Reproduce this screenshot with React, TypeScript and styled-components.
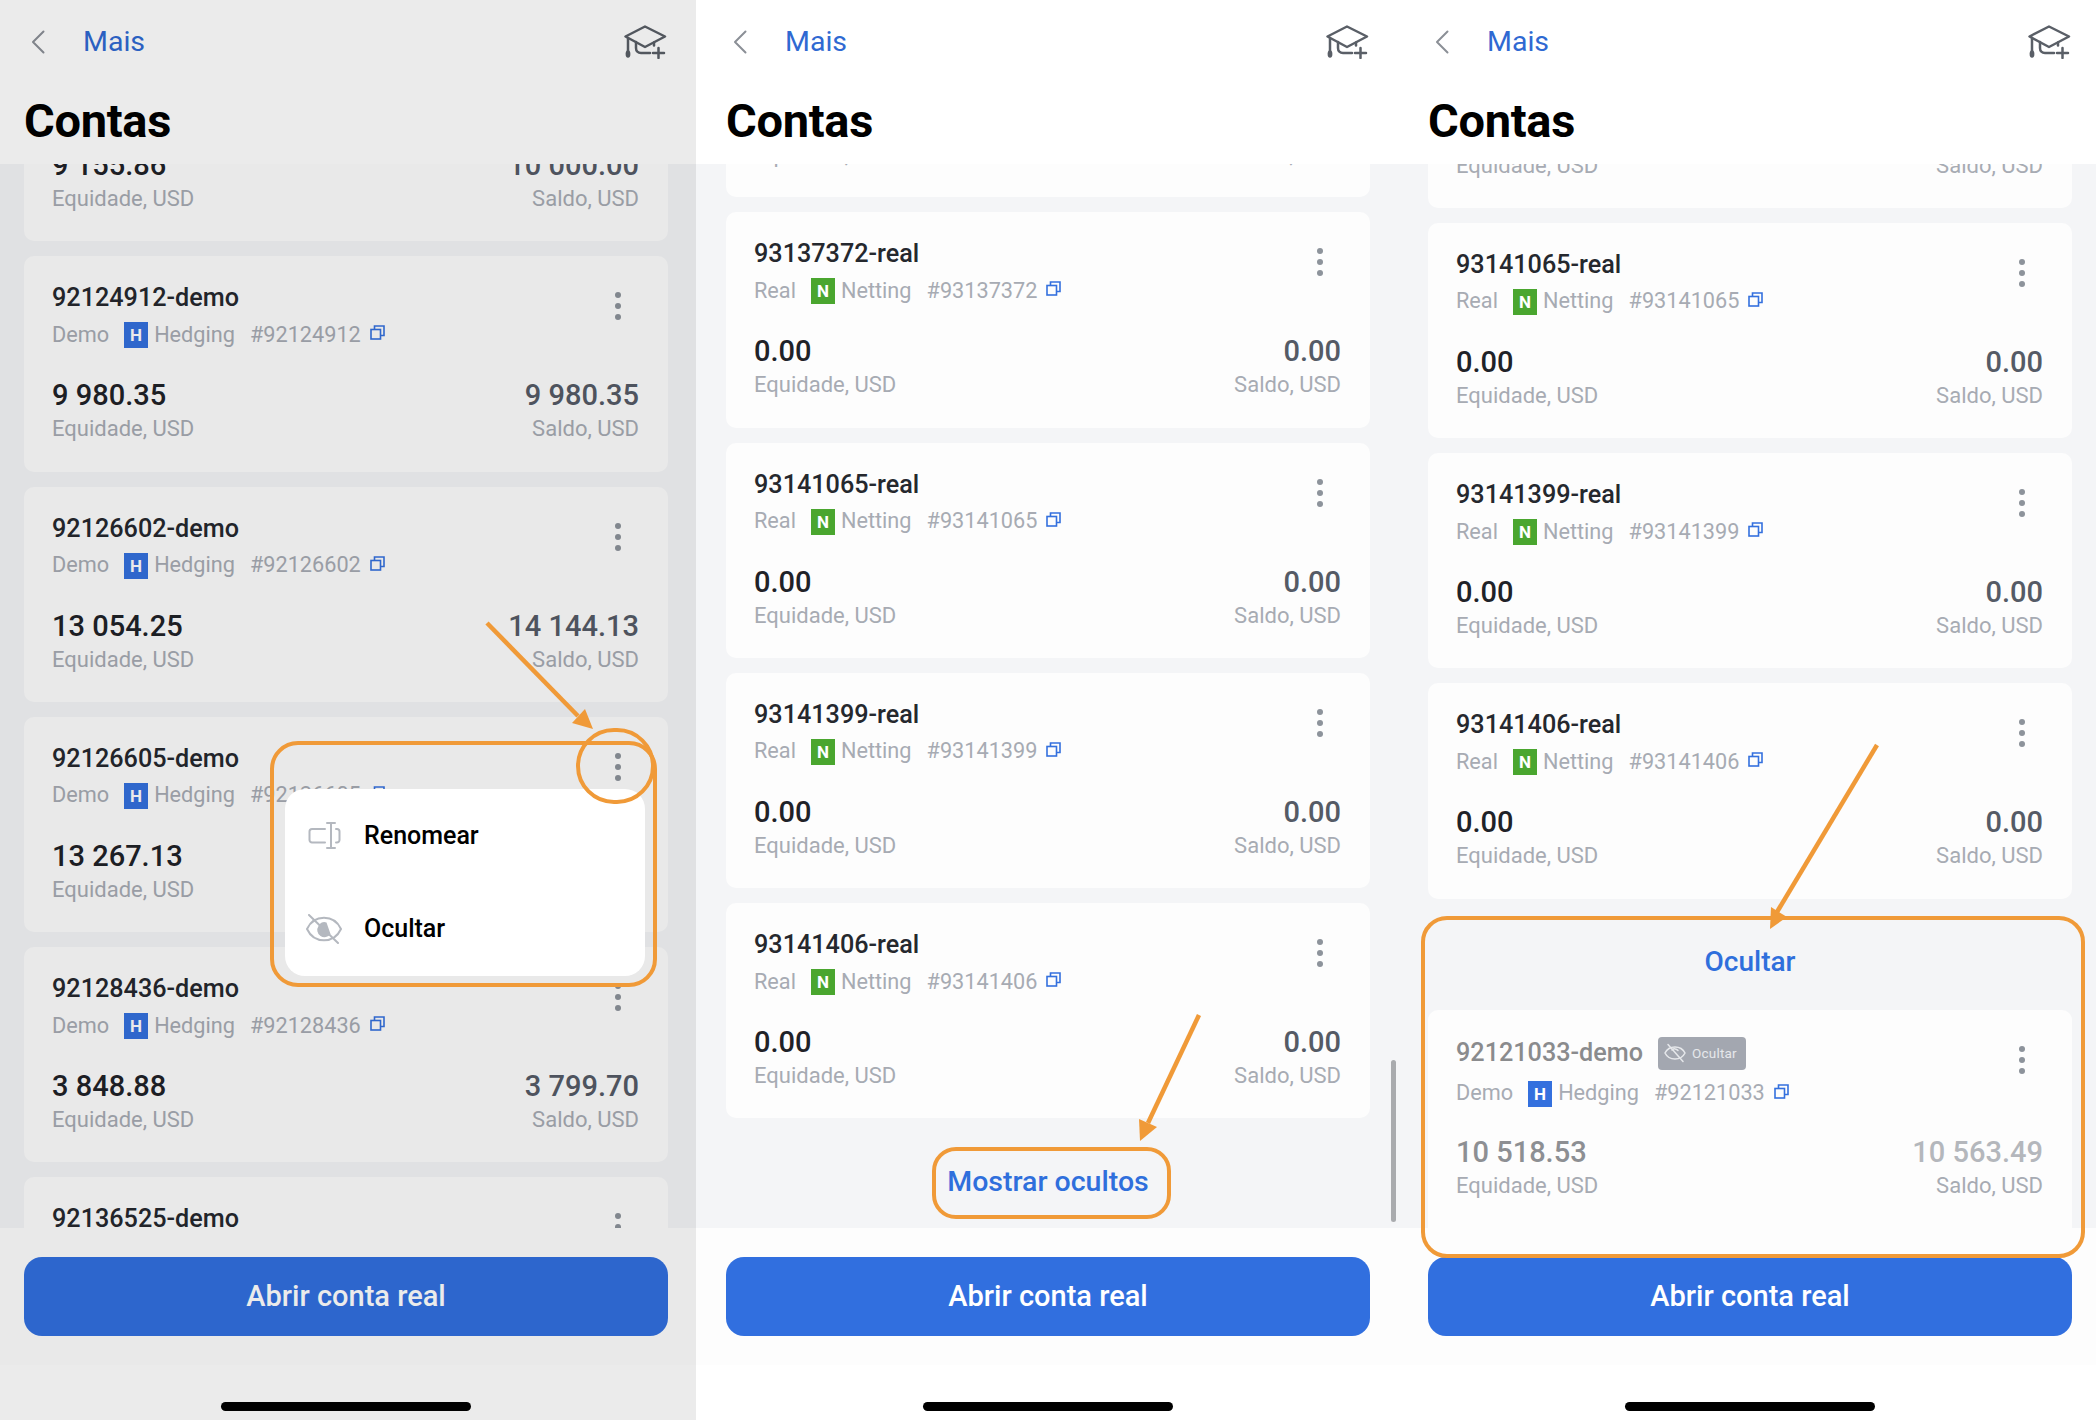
import React from "react";
import styled, { createGlobalStyle } from "styled-components";

const Global = createGlobalStyle`
  html, body { margin: 0; padding: 0; background: #fff; }
  body { font-family: Roboto, "Liberation Sans", sans-serif; }
  * { box-sizing: border-box; }
`;

const Page = styled.div`
  width: 2096px;
  height: 1420px;
  display: grid;
  grid-template-columns: 696px 706px 694px;
  overflow: hidden;
`;

const Panel = styled.section`
  position: relative;
  height: 1420px;
  display: flex;
  flex-direction: column;
  overflow: hidden;
  background: #fff;
`;

const Header = styled.header<{ $inset: number }>`
  height: 164px;
  flex: none;
  padding-left: ${(p) => p.$inset}px;
  background: #fff;
`;

const TopRow = styled.div`
  width: 643px;
  height: 84px;
  padding-left: 7px;
  display: flex;
  align-items: center;
`;

const Back = styled.svg`
  width: 14px;
  height: 24px;
  margin-right: 38px;
  flex: none;
`;

const BackLabel = styled.span`
  font-size: 28.5px;
  line-height: 34px;
  color: #2f69d2;
  flex: 1;
`;

const CapIcon = styled.svg`
  width: 43px;
  height: 34px;
  margin-top: -1px;
  flex: none;
`;

const Title = styled.h1`
  margin: 10px 0 0;
  font-size: 47px;
  line-height: 54px;
  font-weight: 700;
  color: #000;
  letter-spacing: -0.3px;
`;

const ListArea = styled.div<{ $inset: number }>`
  flex: 1;
  min-height: 0;
  overflow: hidden;
  background: #f4f5f7;
  padding-left: ${(p) => p.$inset}px;
`;

const List = styled.div<{ $scroll: number }>`
  width: 644px;
  margin-top: ${(p) => -p.$scroll}px;
  display: flex;
  flex-direction: column;
  gap: 15px;
`;

const Card = styled.article<{ $hidden?: boolean }>`
  height: ${(p) => (p.$hidden ? 240 : 215.3)}px;
  flex: none;
  padding: 24px 29px 0 28px;
  border-radius: 10px;
  background: #fdfdfd;
`;

const Head = styled.div`
  display: flex;
  justify-content: space-between;
  align-items: flex-start;
  padding-right: 18px;
`;

const Info = styled.div`
  min-width: 0;
`;

const NameRow = styled.div<{ $hidden?: boolean }>`
  display: flex;
  align-items: center;
  height: ${(p) => (p.$hidden ? 39 : 34)}px;
  padding-top: ${(p) => (p.$hidden ? 0 : 2)}px;
  gap: 15px;
`;

const Name = styled.div<{ $hidden?: boolean }>`
  font-size: 25.2px;
  line-height: 34px;
  font-weight: 500;
  white-space: nowrap;
  color: ${(p) => (p.$hidden ? "#8a8b8d" : "#25282e")};
`;

const HiddenTag = styled.div`
  width: 88px;
  height: 33px;
  display: flex;
  align-items: center;
  gap: 6px;
  padding-left: 6px;
  border-radius: 4px;
  background: #a3a7b0;
  color: #e6e8eb;
  font-size: 13.5px;
  letter-spacing: 0.2px;
`;

const SubRow = styled.div`
  margin-top: 8px;
  height: 26px;
  padding-bottom: 2px;
  display: flex;
  align-items: center;
  font-size: 21.7px;
  color: #a7abb3;
  white-space: nowrap;
`;

const Badge = styled.span<{ $kind: "H" | "N" }>`
  width: 24px;
  height: 26px;
  margin: 2px 6px 0 15px;
  flex: none;
  display: flex;
  align-items: center;
  justify-content: center;
  background: ${(p) => (p.$kind === "H" ? "#3470de" : "#4aa62f")};
  color: #fff;
  font-size: 17px;
  font-weight: 700;
`;

const AccountNo = styled.span`
  margin-left: 15px;
`;

const CopyIcon = styled.svg`
  width: 15px;
  height: 15px;
  margin: -3px 0 0 9px;
  flex: none;
`;

const Dots = styled.div`
  margin-top: 12px;
  display: flex;
  flex-direction: column;
  gap: 5px;
  flex: none;
`;

const Dot = styled.i`
  width: 6px;
  height: 6px;
  border-radius: 50%;
  background: #8d939b;
`;

const Figures = styled.div<{ $hidden?: boolean }>`
  margin-top: ${(p) => (p.$hidden ? 28 : 30)}px;
  display: flex;
  justify-content: space-between;
`;

const Figure = styled.div<{ $end?: boolean }>`
  text-align: ${(p) => (p.$end ? "right" : "left")};
`;

const Value = styled.div<{ $tone: string }>`
  font-size: 29px;
  line-height: 34px;
  font-weight: 500;
  color: ${(p) => p.$tone};
`;

const Caption = styled.div`
  margin-top: 4px;
  font-size: 22px;
  line-height: 26px;
  color: #a7abb3;
`;

const SectionLink = styled.div<{ $size: number }>`
  height: 111px;
  padding-top: 15px;
  margin: -15px 0;
  flex: none;
  display: flex;
  align-items: center;
  justify-content: center;
  font-size: ${(p) => p.$size}px;
  font-weight: 500;
  color: #2f6fdc;
`;

const Footer = styled.footer<{ $inset: number }>`
  flex: none;
  height: 192px;
  padding: 29px 0 0 ${(p) => p.$inset}px;
  background: linear-gradient(#fdfdfd 137px, #fff 137px);
`;

const OpenButton = styled.button`
  display: block;
  width: 644px;
  height: 79px;
  padding: 0 0 2px;
  border: 0;
  border-radius: 18px;
  background: #316fdf;
  color: #fff;
  font-family: inherit;
  font-size: 29px;
  font-weight: 500;
`;

const HomeBar = styled.div`
  width: 250px;
  height: 9px;
  margin: 66px 0 0 197px;
  border-radius: 5px;
  background: #000;
`;

const Scrim = styled.div`
  position: absolute;
  inset: 0;
  background: rgba(0, 0, 0, 0.08);
`;

const Menu = styled.div`
  position: absolute;
  left: 285px;
  top: 789px;
  width: 360px;
  height: 187px;
  padding-bottom: 1px;
  border-radius: 20px;
  background: #fff;
  display: flex;
  flex-direction: column;
`;

const MenuItem = styled.div`
  flex: 1;
  display: flex;
  align-items: center;
  gap: 22px;
  padding-left: 21px;
  font-size: 25px;
  font-weight: 500;
  color: #000;
`;

const MenuIcon = styled.svg`
  width: 36px;
  height: 30px;
  flex: none;
`;

const TagEye = styled.svg`
  width: 22px;
  height: 20px;
  flex: none;
`;

const Highlight = styled.div<{ $x: number; $y: number; $w: number; $h: number; $r: number }>`
  position: absolute;
  left: ${(p) => p.$x}px;
  top: ${(p) => p.$y}px;
  width: ${(p) => p.$w}px;
  height: ${(p) => p.$h}px;
  border: 4.5px solid #f09a38;
  border-radius: ${(p) => p.$r}px;
  pointer-events: none;
`;

const Arrow = styled.svg`
  position: absolute;
  inset: 0;
  width: 100%;
  height: 100%;
  pointer-events: none;
`;

const ScrollThumb = styled.div`
  position: absolute;
  left: 695px;
  top: 1060px;
  width: 5px;
  height: 162px;
  border-radius: 3px;
  background: #a9abae;
`;

const BackGlyph = () => (
  <Back viewBox="0 0 14 24" fill="none" stroke="#8b8f96" strokeWidth="2" strokeLinecap="round" strokeLinejoin="round">
    <path d="M12.5 1.5 2 12l10.5 10.5" />
  </Back>
);

const CapGlyph = () => (
  <CapIcon viewBox="0 0 43 34" fill="none" stroke="#5a5f67" strokeWidth="2.5" strokeLinecap="round" strokeLinejoin="round">
    <path d="M21 1.500 1.500 11.500 21 22l20-10.500z" />
    <path d="M4 13v13" />
    <ellipse cx="4" cy="29" rx="2.400" ry="3.800" fill="#5a5f67" stroke="none" />
    <path d="M12 17v6c0 3 2 5 5 5h9" />
    <path d="M30 17.500v3" />
    <path d="M34.500 23v10M29 28h11" />
  </CapIcon>
);

const CopyGlyph = () => (
  <CopyIcon viewBox="0 0 15 15" fill="none" stroke="#3470de" strokeWidth="1.6">
    <rect x="1" y="4.500" width="9.500" height="9.500" />
    <path d="M4.500 4.500V1H14v9.500h-3.500" />
  </CopyIcon>
);

const EyeOff = () => (
  <MenuIcon viewBox="0 0 36 30" fill="none" stroke="#b4b8bf" strokeWidth="2">
    <path d="M1 15C8 0 28 0 35 15 28 30 8 30 1 15z" />
    <path d="M12.500 12a6 6 0 0 1 8-3.500l4 11.500a6 6 0 0 1-12-8z" fill="#b4b8bf" stroke="none" />
    <path d="M3 1l29 28" strokeLinecap="round" />
  </MenuIcon>
);

const TagEyeGlyph = () => (
  <TagEye viewBox="0 0 22 20" fill="none" stroke="#e6e8eb" strokeWidth="1.5" strokeLinecap="round">
    <path d="M1 10C5 2 17 2 21 10 17 18 5 18 1 10z" />
    <path d="M8 7a4 4 0 0 1 6 .5" />
    <path d="M4 1.500l15 17" />
  </TagEye>
);

const RenameGlyph = () => (
  <MenuIcon viewBox="0 0 36 30" fill="none" stroke="#b4b8bf" strokeWidth="2" strokeLinecap="round">
    <path d="M19 8H6a2.500 2.500 0 0 0-2.500 2.500v8.500A2.500 2.500 0 0 0 6 21.500h13" />
    <path d="M25 2v25M21 2h8M21 27h8" />
    <path d="M30 8h1a2.500 2.500 0 0 1 2.500 2.500v8.500a2.500 2.500 0 0 1-2.500 2.500h-1" />
  </MenuIcon>
);

type Account = {
  name: string;
  kind: "H" | "N";
  equity: string;
  balance: string;
  hidden?: boolean;
};

const AccountCard = ({ name, kind, equity, balance, hidden }: Account) => {
  const [id, type] = name.split("-");
  return (
    <Card $hidden={hidden}>
      <Head>
        <Info>
          <NameRow $hidden={hidden}>
            <Name $hidden={hidden}>{name}</Name>
            {hidden && (
              <HiddenTag>
                <TagEyeGlyph />
                Ocultar
              </HiddenTag>
            )}
          </NameRow>
          <SubRow>
            {type === "demo" ? "Demo" : "Real"}
            <Badge $kind={kind}>{kind}</Badge>
            {kind === "H" ? "Hedging" : "Netting"}
            <AccountNo>#{id}</AccountNo>
            <CopyGlyph />
          </SubRow>
        </Info>
        <Dots>
          <Dot />
          <Dot />
          <Dot />
        </Dots>
      </Head>
      <Figures $hidden={hidden}>
        <Figure>
          <Value $tone={hidden ? "#8d8f93" : "#1f2228"}>{equity}</Value>
          <Caption>Equidade, USD</Caption>
        </Figure>
        <Figure $end>
          <Value $tone={hidden ? "#b4b7bc" : "#555b66"}>{balance}</Value>
          <Caption>Saldo, USD</Caption>
        </Figure>
      </Figures>
    </Card>
  );
};

const ArrowMark = ({ line, head }: { line: string; head: string }) => (
  <Arrow>
    <path d={line} stroke="#f09a38" strokeWidth="4.5" fill="none" />
    <polygon points={head} fill="#f09a38" />
  </Arrow>
);

const Shell = ({ inset, scroll, accounts, children, overlay }: {
  inset: number;
  scroll: number;
  accounts: Account[];
  children?: React.ReactNode;
  overlay?: React.ReactNode;
}) => (
  <Panel>
    <Header $inset={inset}>
      <TopRow>
        <BackGlyph />
        <BackLabel>Mais</BackLabel>
        <CapGlyph />
      </TopRow>
      <Title>Contas</Title>
    </Header>
    <ListArea $inset={inset}>
      <List $scroll={scroll}>
        {accounts.map((a) => (
          <AccountCard key={a.name} {...a} />
        ))}
        {children}
      </List>
    </ListArea>
    <Footer $inset={inset}>
      <OpenButton>Abrir conta real</OpenButton>
      <HomeBar />
    </Footer>
    {overlay}
  </Panel>
);

const demo: Account[] = [
  { name: "92121033-demo", kind: "H", equity: "9 155.86", balance: "10 000.00" },
  { name: "92124912-demo", kind: "H", equity: "9 980.35", balance: "9 980.35" },
  { name: "92126602-demo", kind: "H", equity: "13 054.25", balance: "14 144.13" },
  { name: "92126605-demo", kind: "H", equity: "13 267.13", balance: "13 267.13" },
  { name: "92128436-demo", kind: "H", equity: "3 848.88", balance: "3 799.70" },
  { name: "92136525-demo", kind: "H", equity: "0.00", balance: "0.00" },
];

const real = (ids: string[]): Account[] =>
  ids.map((id) => ({ name: `${id}-real`, kind: "N", equity: "0.00", balance: "0.00" }));

export default function App() {
  return (
    <>
      <Global />
      <Page>
        <Shell
          inset={24}
          scroll={138}
          accounts={demo}
          overlay={
            <>
              <Scrim />
              <Menu>
                <MenuItem>
                  <RenameGlyph />
                  Renomear
                </MenuItem>
                <MenuItem>
                  <EyeOff />
                  Ocultar
                </MenuItem>
              </Menu>
              <Highlight $x={270} $y={741} $w={387} $h={246} $r={28} />
              <Highlight $x={576} $y={728} $w={79} $h={76} $r={40} />
              <ArrowMark line="M487 623 578 716" head="593,729 572,723 585,709" />
            </>
          }
        />
        <Shell
          inset={30}
          scroll={182}
          accounts={real(["93137371", "93137372", "93141065", "93141399", "93141406"])}
          overlay={
            <>
              <ScrollThumb />
              <Highlight $x={236} $y={1147} $w={239} $h={72} $r={24} />
              <ArrowMark line="M503 1015 452 1123" head="444,1141 443,1119 461,1127" />
            </>
          }
        >
          <SectionLink $size={28.5}>Mostrar ocultos</SectionLink>
        </Shell>
        <Shell
          inset={26}
          scroll={171.5}
          accounts={real(["93137372", "93141065", "93141399", "93141406"])}
          overlay={
            <>
              <Highlight $x={19} $y={916} $w={664} $h={342} $r={26} />
              <ArrowMark line="M475 745 375 912" head="368,929 369,907 385,917" />
            </>
          }
        >
          <SectionLink $size={28}>Ocultar</SectionLink>
          <AccountCard name="92121033-demo" kind="H" equity="10 518.53" balance="10 563.49" hidden />
        </Shell>
      </Page>
    </>
  );
}
